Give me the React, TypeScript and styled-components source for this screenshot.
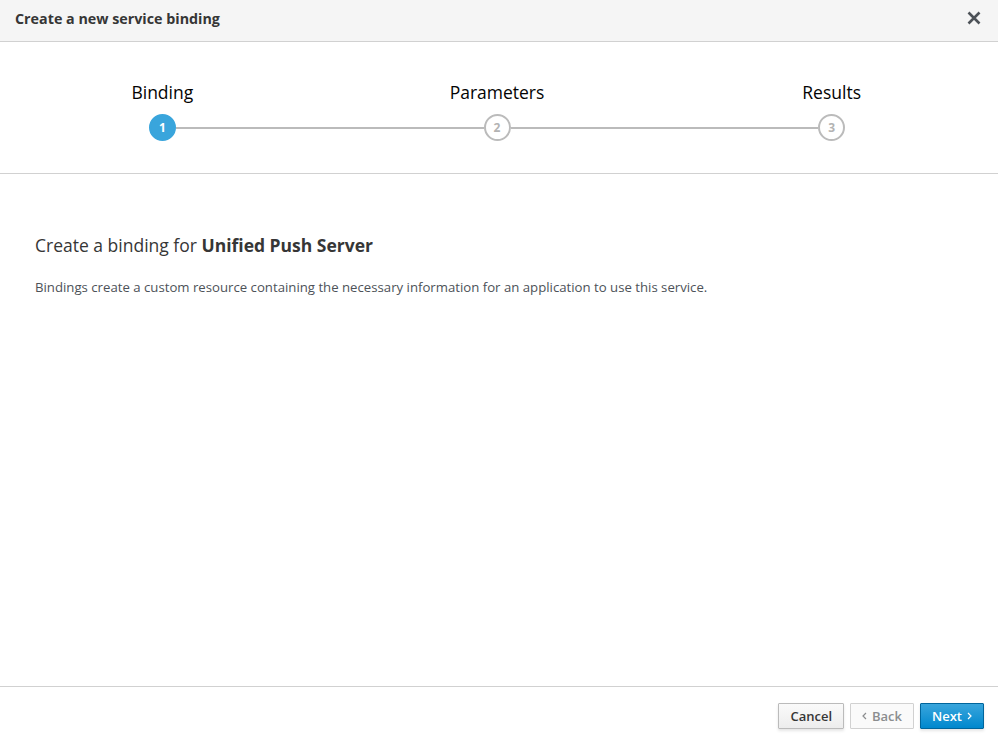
import React from "react";
import styled, { createGlobalStyle } from "styled-components";

const Global = createGlobalStyle`
  html, body { margin: 0; padding: 0; background: #fff; }
  body { font-family: "Open Sans", "Noto Sans", sans-serif; color: #363636; }
  * { box-sizing: border-box; }
`;

const Modal = styled.div`
  width: 998px;
  height: 741px;
  display: flex;
  flex-direction: column;
  background: #fff;
`;

const Header = styled.div`
  height: 42px;
  flex: none;
  display: flex;
  align-items: center;
  justify-content: space-between;
  padding: 0 15px;
  background: #f5f5f5;
  border-bottom: 1px solid #d1d1d1;
`;

const Title = styled.h4`
  margin: 0;
  font-size: 14.3px;
  font-weight: 700;
  color: #363636;
  padding-bottom: 4px;
`;

const CloseButton = styled.button`
  border: 0;
  background: none;
  padding: 0;
  width: 18px;
  height: 18px;
  display: flex;
  align-items: center;
  justify-content: center;
  cursor: pointer;
  margin-right: 0;
  margin-bottom: 5px;
`;

const StepsSection = styled.div`
  flex: none;
  height: 132px;
  border-bottom: 1px solid #d1d1d1;
  overflow: hidden;
`;

const StepList = styled.ol`
  list-style: none;
  margin: 0 -1px 0 -5px;
  padding: 0;
  display: grid;
  grid-template-columns: 1fr 1fr 1fr;
`;

const Step = styled.li`
  display: flex;
  flex-direction: column;
  align-items: center;
  padding-top: 38px;
`;

const StepLabel = styled.span`
  font-size: 17.5px;
  line-height: 24px;
  color: #030303;
`;

const Track = styled.div`
  width: 100%;
  display: flex;
  align-items: center;
  margin-top: 10px;
`;

const Line = styled.div<{ $show: boolean }>`
  flex: 1;
  height: 2px;
  background: ${(p) => (p.$show ? "#bbbbbb" : "transparent")};
`;

const Circle = styled.div<{ $active: boolean }>`
  width: 27px;
  height: 27px;
  border-radius: 50%;
  flex: none;
  display: flex;
  align-items: center;
  justify-content: center;
  font-size: 12px;
  font-weight: 700;
  background: ${(p) => (p.$active ? "#39a5dc" : "#fff")};
  border: 2px solid ${(p) => (p.$active ? "#39a5dc" : "#bbbbbb")};
  color: ${(p) => (p.$active ? "#fff" : "#b3b3b3")};
`;

const Body = styled.div`
  flex: 1;
  padding: 59px 35px 0;
`;

const Heading = styled.h3`
  margin: 0;
  font-size: 17.5px;
  font-weight: 400;
  line-height: 24px;
  color: #363636;
`;

const Strong = styled.strong`
  font-weight: 700;
`;

const Text = styled.p`
  margin: 21px 0 0;
  font-size: 13.2px;
  line-height: 18px;
  color: #4d5258;
`;

const Footer = styled.div`
  flex: none;
  border-top: 1px solid #d1d1d1;
  padding: 16px 14px 12px;
  display: flex;
  justify-content: flex-end;
  gap: 6px;
`;

const Button = styled.button<{ $variant: "default" | "primary" | "disabled" }>`
  height: 26px;
  padding: 0 11px;
  font-family: "Open Sans", "Noto Sans", sans-serif;
  font-size: 13px;
  font-weight: 600;
  border-radius: 1px;
  display: flex;
  align-items: center;
  gap: 5px;
  border: 1px solid
    ${(p) => (p.$variant === "primary" ? "#00659c" : p.$variant === "disabled" ? "#d1d1d1" : "#bbbbbb")};
  background: ${(p) =>
    p.$variant === "primary"
      ? "linear-gradient(#39a5dc, #0088ce)"
      : p.$variant === "disabled"
      ? "#fafafa"
      : "linear-gradient(#fafafa, #ededed)"};
  color: ${(p) => (p.$variant === "primary" ? "#fff" : p.$variant === "disabled" ? "#8b8d8f" : "#363636")};
  box-shadow: ${(p) => (p.$variant === "disabled" ? "none" : "0 2px 3px rgba(3,3,3,0.1)")};
`;

const Chevron = ({ dir }: { dir: "left" | "right" }) => (
  <svg width="5" height="8" viewBox="0 0 5 8">
    <path
      d={dir === "right" ? "M1 1 L4 4 L1 7" : "M4 1 L1 4 L4 7"}
      fill="none"
      stroke="currentColor"
      strokeWidth="1.2"
    />
  </svg>
);

const steps = ["Binding", "Parameters", "Results"];

export default function App() {
  return (
    <Modal>
      <Global />
      <Header>
        <Title>Create a new service binding</Title>
        <CloseButton aria-label="Close">
          <svg width="14" height="14" viewBox="0 0 14 14">
            <path d="M1.5 1.5 L12.5 12.5 M12.5 1.5 L1.5 12.5" stroke="#4d5258" strokeWidth="2.6" />
          </svg>
        </CloseButton>
      </Header>
      <StepsSection>
        <StepList>
          {steps.map((s, i) => (
            <Step key={s}>
              <StepLabel>{s}</StepLabel>
              <Track>
                <Line $show={i > 0} />
                <Circle $active={i === 0}>{i + 1}</Circle>
                <Line $show={i < steps.length - 1} />
              </Track>
            </Step>
          ))}
        </StepList>
      </StepsSection>
      <Body>
        <Heading>
          Create a binding for <Strong>Unified Push Server</Strong>
        </Heading>
        <Text>
          Bindings create a custom resource containing the necessary information for an application to use this service.
        </Text>
      </Body>
      <Footer>
        <Button $variant="default">Cancel</Button>
        <Button $variant="disabled" disabled>
          <Chevron dir="left" />
          Back
        </Button>
        <Button $variant="primary">
          Next
          <Chevron dir="right" />
        </Button>
      </Footer>
    </Modal>
  );
}
